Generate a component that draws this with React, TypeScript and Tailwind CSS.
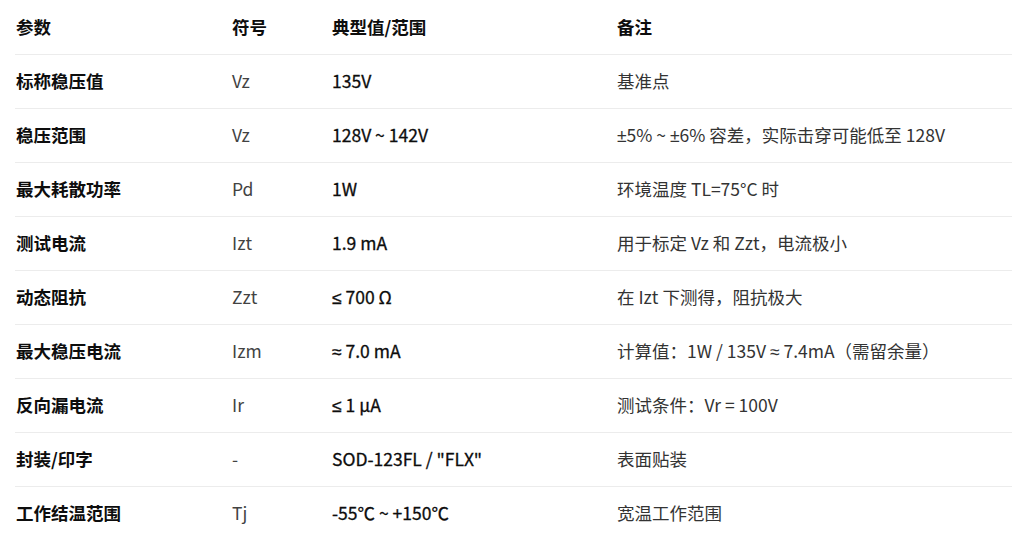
import React from 'react';

type Row = { name: string; sym: string; value: string; note: string };

const rows: Row[] = [
    { name: '标称稳压值', sym: 'Vz', value: '135V', note: '基准点' },
    { name: '稳压范围', sym: 'Vz', value: '128V ~ 142V', note: '±5% ~ ±6% 容差，实际击穿可能低至 128V' },
    { name: '最大耗散功率', sym: 'Pd', value: '1W', note: '环境温度 TL=75°C 时' },
    { name: '测试电流', sym: 'Izt', value: '1.9 mA', note: '用于标定 Vz 和 Zzt，电流极小' },
    { name: '动态阻抗', sym: 'Zzt', value: '≤ 700 Ω', note: '在 Izt 下测得，阻抗极大' },
    { name: '最大稳压电流', sym: 'Izm', value: '≈ 7.0 mA', note: '计算值：1W / 135V ≈ 7.4mA（需留余量）' },
    { name: '反向漏电流', sym: 'Ir', value: '≤ 1 μA', note: '测试条件：Vr = 100V' },
    { name: '封装/印字', sym: '-', value: 'SOD-123FL / "FLX"', note: '表面贴装' },
    { name: '工作结温范围', sym: 'Tj', value: '-55℃ ~ +150℃', note: '宽温工作范围' },
];

// ±、≤、≈ 在 CJK 字体里是全角，换成西文字体显示
const Txt: React.FC<{ s: string }> = ({ s }) => (
    <>
        {s.split(/([±≤≈])/).map((part, i) =>
            /^[±≤≈]$/.test(part) ? (
                <span key={i} className="font-['Liberation_Sans',sans-serif]">{part}</span>
            ) : (
                <React.Fragment key={i}>{part}</React.Fragment>
            )
        )}
    </>
);

const grid = 'grid grid-cols-[217px_100px_285px_1fr] items-center h-[54px]';

export default function App() {
    return (
        <div className="w-[1012px] h-[549px] bg-white overflow-hidden font-['Noto_Sans_CJK_SC',sans-serif] text-[17.5px]">
            <div className="ml-[15px]">
                {/* 表头 */}
                <div className={`${grid} font-bold text-[#0d0d0d]`}>
                    <div className="pl-px">参数</div>
                    <div>符号</div>
                    <div>典型值/范围</div>
                    <div>备注</div>
                </div>
                {rows.map((r) => (
                    <div key={r.name} className={`${grid} border-t border-[#ececec]`}>
                        <div className="pl-px font-bold text-[#0d0d0d]">{r.name}</div>
                        <div className="text-[#424242]">{r.sym}</div>
                        <div className="text-[#0d0d0d] [-webkit-text-stroke:0.3px_#0d0d0d]"><Txt s={r.value} /></div>
                        <div className="text-[#333333] whitespace-nowrap"><Txt s={r.note} /></div>
                    </div>
                ))}
            </div>
        </div>
    );
}
